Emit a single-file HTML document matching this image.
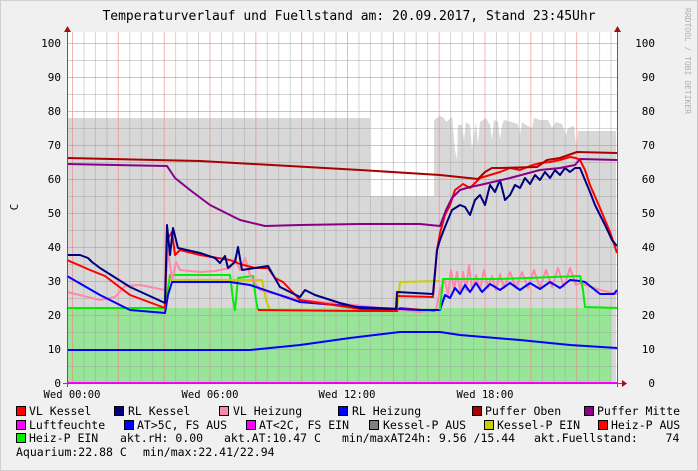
<!DOCTYPE html>
<html><head><meta charset="utf-8"><style>
html,body{margin:0;padding:0}
body{width:698px;height:471px;background:#f0f0f0;position:relative;overflow:hidden;font-family:"DejaVu Sans Mono","Liberation Mono",monospace;color:#000}
.t{position:absolute;font-size:11.5px;line-height:12px;white-space:pre}
.sq{position:absolute;width:8px;height:8px;border:1px solid #000}
</style></head><body>
<div style="position:absolute;left:0;top:0;width:696px;height:469px;border:1px solid #d0d0d0;border-right-color:#c8c8c8"></div>
<div class="t" style="left:0;width:698px;text-align:center;top:10px;font-size:13px;line-height:14px">Temperaturverlauf und Fuellstand am: 20.09.2017, Stand 23:45Uhr</div>
<svg width="698" height="471" style="position:absolute;left:0;top:0" xmlns="http://www.w3.org/2000/svg">
<defs>
<pattern id="hg" patternUnits="userSpaceOnUse" x="0" y="383" width="698" height="34">
<line x1="0" y1="0.5" x2="698" y2="0.5" stroke="#f08080" stroke-opacity="0.6"/>
<line x1="0" y1="17.5" x2="698" y2="17.5" stroke="#a0a0a0" stroke-opacity="0.45"/>
</pattern>
<pattern id="vg" patternUnits="userSpaceOnUse" x="72" y="0" width="45.833" height="471">
<line x1="0.5" y1="0" x2="0.5" y2="471" stroke="#f08080" stroke-opacity="0.6"/>
<line x1="11.96" y1="0" x2="11.96" y2="471" stroke="#a0a0a0" stroke-opacity="0.45"/>
<line x1="23.42" y1="0" x2="23.42" y2="471" stroke="#a0a0a0" stroke-opacity="0.45"/>
<line x1="34.87" y1="0" x2="34.87" y2="471" stroke="#a0a0a0" stroke-opacity="0.45"/>
</pattern>
</defs>
<rect x="67" y="32" width="550" height="351" fill="#fff"/>
<!-- fuellstand area -->
<polygon fill="#d8d8d8" points="67,118 370,118 370,196 434,196 434,120 440,116 444,118 446,122 452,117 455,150 457,160 458,125 462,125 464,140 466,122 470,125 472,150 474,135 476,122 478,145 480,122 486,118 490,125 492,140 494,120 498,122 500,140 502,125 504,120 518,124 520,135 522,122 526,125 532,128 534,118 540,120 548,120 552,128 556,122 562,124 566,135 568,128 574,126 576,145 578,131 616,131 616,383 67,383"/>
<rect x="67" y="308" width="544" height="75" fill="#98e498"/>
<rect x="67" y="32" width="550" height="351" fill="url(#hg)"/>
<rect x="67" y="32" width="550" height="351" fill="url(#vg)"/>
<g fill="none" stroke-width="2" stroke-linejoin="round">
<polyline stroke="#0000ff" points="67,350 250,350 300,345 350,338 400,332 440,332 460,335 520,340 570,345 617,348"/>
<polyline stroke="#00ee00" points="67,308 165,308 170,275 230,275 233,300 235,310 238,278 253,276 256,300 258,310"/>
<polyline stroke="#cccc00" points="170,280 262,280 266,300 270,310"/>
<polyline stroke="#ff0000" points="258,310 360,311 397,311 400,308 433,311 436,310"/>
<polyline stroke="#cccc00" points="397,310 400,282 440,281"/>
<polyline stroke="#ff88aa" points="67,292 100,300 115,297 125,286 140,285 165,290 168,250 172,280 176,262 180,270 200,272 215,271 230,268 235,258 240,270 245,258 250,275 260,290 300,300 355,305 380,308 420,312 436,310 440,290 445,280 448,296 451,270 454,290 457,272 460,292 463,272 466,290 469,265 472,290 476,275 480,290 484,270 488,288 492,276 496,290 500,274 504,288 510,272 516,288 522,272 528,288 534,270 540,288 546,270 552,287 558,268 564,287 570,268 576,285 580,283 600,290 617,294"/>
<polyline stroke="#0000ff" points="67,276 100,295 130,310 165,313 168,295 172,282 180,282 230,282 250,285 300,302 360,307 420,310 440,310 445,295 450,298 455,288 460,294 465,285 470,292 476,283 482,292 490,284 500,290 510,283 520,290 530,283 540,289 550,282 560,288 570,280 580,281 585,282 600,294 614,294 617,290"/>
<polyline stroke="#00ee00" points="440,310 443,279 500,279 580,276 583,290 585,307 617,308"/>
<polyline stroke="#ff0000" points="67,260 90,270 105,276 130,295 165,308 167,240 172,232 175,255 180,250 200,255 230,260 240,264 255,268 268,268 275,278 283,282 300,300 340,306 360,309 397,311 397,296 433,297 437,250 440,233 445,215 450,205 455,190 463,184 470,188 480,178 490,175 500,172 510,168 520,170 530,166 540,163 550,162 560,160 570,157 576,158 580,160 585,170 590,185 600,208 610,232 617,253"/>
<polyline stroke="#000080" points="67,255 80,255 88,258 92,262 100,268 130,287 165,303 167,225 170,255 173,228 178,248 200,253 215,258 220,263 225,256 228,268 235,262 238,247 242,270 255,268 268,266 280,287 300,297 305,290 315,295 340,303 360,308 396,309 397,292 433,294 437,250 440,240 443,232 447,222 452,210 460,205 465,207 470,215 475,200 480,195 485,205 490,185 495,192 500,180 505,200 510,195 515,185 520,188 525,178 530,184 535,175 540,180 545,172 550,178 555,170 560,175 565,168 570,172 575,168 580,168 585,180 590,192 595,205 605,225 612,240 617,246"/>
<polyline stroke="#aa0000" points="67,158 200,161 360,170 440,175 478,179 485,172 492,168 500,168 537,167 547,160 560,158 577,152 617,153"/>
<polyline stroke="#880088" points="67,164 167,166 175,178 190,190 210,205 240,220 265,226 300,225 360,224 420,224 440,226 446,210 452,198 460,190 470,187 480,185 510,178 540,170 560,168 575,165 580,159 617,160"/>
<line x1="67" y1="383" x2="617" y2="383" stroke="#ff00ff" stroke-width="2"/>
</g>
<line x1="67.5" y1="30" x2="67.5" y2="387" stroke="#606060"/>
<line x1="617.5" y1="30" x2="617.5" y2="387" stroke="#606060"/>
<line x1="63" y1="383.5" x2="622" y2="383.5" stroke="#606060"/>
<polygon points="64,32 71,32 67.5,26" fill="#a01010"/>
<polygon points="614,32 621,32 617.5,26" fill="#a01010"/>
<polygon points="622,380 622,387 627,383.5" fill="#a01010"/>
<g font-family="DejaVu Sans Mono, monospace" font-size="11" fill="#000">
<g text-anchor="end">
<text x="61" y="47">100</text><text x="61" y="81">90</text><text x="61" y="115">80</text><text x="61" y="149">70</text><text x="61" y="183">60</text><text x="61" y="217">50</text><text x="61" y="251">40</text><text x="61" y="285">30</text><text x="61" y="319">20</text><text x="61" y="353">10</text><text x="61" y="387">0</text>
<text x="655" y="47">100</text><text x="655" y="81">90</text><text x="655" y="115">80</text><text x="655" y="149">70</text><text x="655" y="183">60</text><text x="655" y="217">50</text><text x="655" y="251">40</text><text x="655" y="285">30</text><text x="655" y="319">20</text><text x="655" y="353">10</text><text x="655" y="387">0</text>
</g>
<g text-anchor="middle" font-size="10.5">
<text x="72" y="398">Wed 00:00</text><text x="210" y="398">Wed 06:00</text><text x="347" y="398">Wed 12:00</text><text x="485" y="398">Wed 18:00</text>
</g>
<text x="18" y="207" transform="rotate(-90 18 207)" text-anchor="middle">C</text>
<text x="685" y="8" transform="rotate(90 685 8)" font-size="8" fill="#b0b0b0">RRDTOOL / TOBI OETIKER</text>
</g>
</svg>
<div class="sq" style="left:16px;top:406px;background:#ff0000"></div><div class="t" style="left:29px;top:405px">VL Kessel</div>
<div class="sq" style="left:114px;top:406px;background:#000080"></div><div class="t" style="left:128px;top:405px">RL Kessel</div>
<div class="sq" style="left:219px;top:406px;background:#ff88aa"></div><div class="t" style="left:233px;top:405px">VL Heizung</div>
<div class="sq" style="left:338px;top:406px;background:#0000ff"></div><div class="t" style="left:352px;top:405px">RL Heizung</div>
<div class="sq" style="left:472px;top:406px;background:#aa0000"></div><div class="t" style="left:485px;top:405px">Puffer Oben</div>
<div class="sq" style="left:584px;top:406px;background:#880088"></div><div class="t" style="left:597px;top:405px">Puffer Mitte</div>
<div class="sq" style="left:16px;top:420px;background:#ff00ff"></div><div class="t" style="left:29px;top:419px">Luftfeuchte</div>
<div class="sq" style="left:124px;top:420px;background:#0000ff"></div><div class="t" style="left:137px;top:419px">AT&gt;5C, FS AUS</div>
<div class="sq" style="left:246px;top:420px;background:#ff00ff"></div><div class="t" style="left:259px;top:419px">AT&lt;2C, FS EIN</div>
<div class="sq" style="left:369px;top:420px;background:#808080"></div><div class="t" style="left:383px;top:419px">Kessel-P AUS</div>
<div class="sq" style="left:484px;top:420px;background:#cccc00"></div><div class="t" style="left:497px;top:419px">Kessel-P EIN</div>
<div class="sq" style="left:598px;top:420px;background:#ff0000"></div><div class="t" style="left:611px;top:419px">Heiz-P AUS</div>
<div class="sq" style="left:16px;top:433px;background:#00ee00"></div><div class="t" style="left:29px;top:432px">Heiz-P EIN</div>
<div class="t" style="left:120px;top:432px">akt.rH: 0.00</div>
<div class="t" style="left:224px;top:432px">akt.AT:10.47 C</div>
<div class="t" style="left:342px;top:432px">min/maxAT24h: 9.56 /15.44</div>
<div class="t" style="left:534px;top:432px">akt.Fuellstand:    74</div>
<div class="t" style="left:16px;top:446px">Aquarium:22.88 C</div>
<div class="t" style="left:143px;top:446px">min/max:22.41/22.94</div>
</body></html>
